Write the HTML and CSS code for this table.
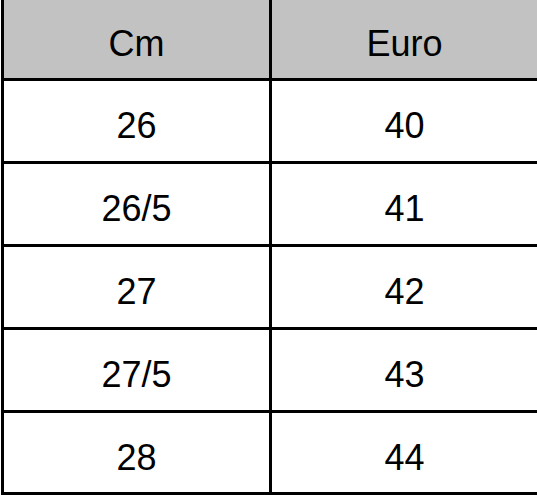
FILE: index.html
```html
<!DOCTYPE html>
<html>
<head>
<meta charset="utf-8">
<link rel="stylesheet" href="styles.css">
</head>
<body>
<div class="size-table">
  <div class="row head">
    <div class="cell">Cm</div>
    <div class="cell">Euro</div>
  </div>
  <div class="row">
    <div class="cell">26</div>
    <div class="cell">40</div>
  </div>
  <div class="row">
    <div class="cell">26/5</div>
    <div class="cell">41</div>
  </div>
  <div class="row">
    <div class="cell">27</div>
    <div class="cell">42</div>
  </div>
  <div class="row">
    <div class="cell">27/5</div>
    <div class="cell">43</div>
  </div>
  <div class="row last">
    <div class="cell">28</div>
    <div class="cell">44</div>
  </div>
</div>
</body>
</html>
```
FILE: styles.css
```css
html, body {
  margin: 0;
  padding: 0;
  overflow: hidden;
  background: #fff;
}
.size-table {
  margin-left: 1px;
  width: 539px;
  border-left: 3px solid #000;
  font-family: "Liberation Sans", Arial, sans-serif;
  font-size: 36px;
  color: #000;
}
.row {
  display: flex;
  height: 80px;
  border-bottom: 3px solid #000;
}
.row.head {
  height: 78px;
  background: #c2c2c2;
}
.row.last {
  height: 79px;
}
.cell {
  box-sizing: border-box;
  width: 268px;
  flex: none;
  text-align: center;
  padding-top: 24px;
  line-height: 41px;
  border-right: 3px solid #000;
}
.row.head .cell {
  padding-top: 23px;
}
```
